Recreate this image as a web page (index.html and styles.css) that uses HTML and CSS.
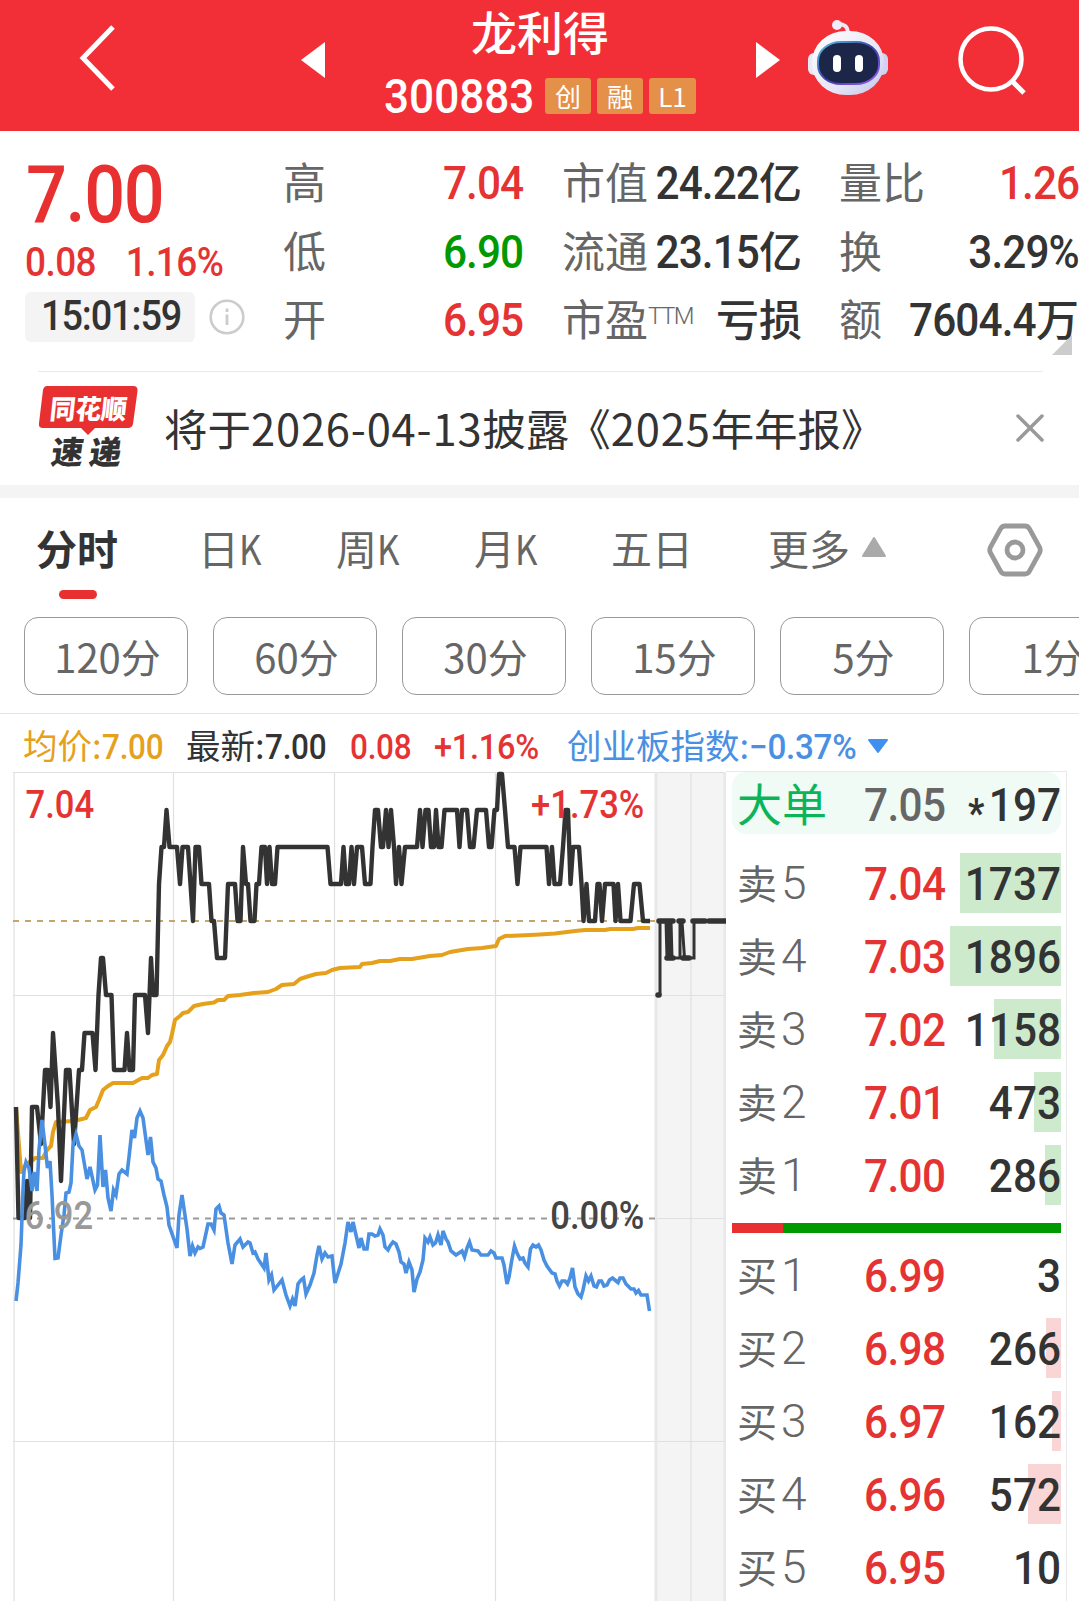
FILE: index.html
```html
<!DOCTYPE html>
<html lang="zh-CN">
<head>
    <meta charset="UTF-8">
    <meta name="viewport" content="width=device-width, initial-scale=1.0">
    <title>龙利得 300883</title>
    <link rel="stylesheet" href="styles.css">
</head>
<body>
    <header class="header">
        <svg class="back" width="40" height="70" viewBox="0 0 40 70"><path d="M36 4 L6 35 L36 66" fill="none" stroke="#fff" stroke-width="5"/></svg>
        <svg class="prev" width="24" height="36" viewBox="0 0 24 36"><path d="M24 0 V36 L0 18 Z" fill="#fff"/></svg>
        <div class="stock">
            <div class="stock-name">龙利得</div>
            <div class="stock-code">
                <span class="code num">300883</span>
                <span class="badge">创</span>
                <span class="badge">融</span>
                <span class="badge badge-l1">L1</span>
            </div>
        </div>
        <svg class="next" width="24" height="36" viewBox="0 0 24 36"><path d="M0 0 V36 L24 18 Z" fill="#fff"/></svg>
        <svg class="robot" width="82" height="80" viewBox="0 0 82 80">
            <defs>
                <linearGradient id="shell" x1="0" y1="0" x2="1" y2="1">
                    <stop offset="0" stop-color="#ffffff"/>
                    <stop offset="0.6" stop-color="#e6e6f6"/>
                    <stop offset="1" stop-color="#c3c5ea"/>
                </linearGradient>
                <linearGradient id="rim" x1="0" y1="0" x2="1" y2="1">
                    <stop offset="0" stop-color="#58c8e0"/>
                    <stop offset="0.5" stop-color="#3a3fa8"/>
                    <stop offset="1" stop-color="#9a5cf0"/>
                </linearGradient>
            </defs>
            <path d="M30 6 Q41 5 41 16" fill="none" stroke="#ece8f6" stroke-width="4"/>
            <circle cx="30" cy="7" r="5" fill="#f1edf9"/>
            <rect x="1" y="35" width="14" height="22" rx="6" fill="#e9eaf8"/>
            <rect x="67" y="35" width="14" height="22" rx="6" fill="#cfd2f2"/>
            <rect x="5" y="13" width="72" height="64" rx="34" ry="31" fill="url(#shell)"/>
            <rect x="11" y="24" width="61" height="42" rx="23" ry="19" fill="#1c2649" stroke="url(#rim)" stroke-width="2"/>
            <rect x="26" y="37" width="8" height="17" rx="4" fill="#fff"/>
            <rect x="48" y="37" width="8" height="17" rx="4" fill="#fff"/>
        </svg>
        <svg class="search" width="70" height="70" viewBox="0 0 70 70"><circle cx="34" cy="34" r="30.5" fill="none" stroke="#fff" stroke-width="4.5"/><path d="M54 55 L67 68" stroke="#fff" stroke-width="5"/></svg>
    </header>

    <section class="quote">
        <div class="price-box">
            <div class="price num">7.00</div>
            <div class="change num"><span>0.08</span><span>1.16%</span></div>
            <div class="time-row">
                <span class="time"><span class="num">15:01:59</span></span>
                <svg width="36" height="36" viewBox="0 0 36 36"><circle cx="18" cy="18" r="16.3" fill="none" stroke="#ccc" stroke-width="2.6"/><path d="M18 15.500 V26 M18 9.500 V13" stroke="#ccc" stroke-width="2.8"/></svg>
            </div>
        </div>
        <div class="col col-a">
            <div class="item"><label>高</label><span class="value"><span class="num red">7.04</span></span></div>
            <div class="item"><label>低</label><span class="value"><span class="num green">6.90</span></span></div>
            <div class="item"><label>开</label><span class="value"><span class="num red">6.95</span></span></div>
        </div>
        <div class="col col-b">
            <div class="item"><label>市值</label><span class="value"><span class="num">24.22</span>亿</span></div>
            <div class="item"><label>流通</label><span class="value"><span class="num">23.15</span>亿</span></div>
            <div class="item"><label>市盈<sup>TTM</sup></label><span class="value">亏损</span></div>
        </div>
        <div class="col col-c">
            <div class="item"><label>量比</label><span class="value"><span class="num red">1.26</span></span></div>
            <div class="item"><label>换</label><span class="value"><span class="num">3.29%</span></span></div>
            <div class="item"><label>额</label><span class="value"><span class="num">7604.4</span>万</span></div>
        </div>
        <div class="corner"></div>
    </section>

    <section class="news">
        <svg class="news-logo" width="102" height="88" viewBox="0 0 102 88">
            <path d="M9 1 H95 Q100 1 99.500 6 L95 39 Q94 43 90 43 H57 L50 50 L43 43 H5 Q0 43 1 38 L5 5 Q6 1 9 1 Z" fill="#e93030"/>
            <text class="logo-top" transform="translate(11 34) skewX(-6)" textLength="77" lengthAdjust="spacingAndGlyphs">同花顺</text>
            <text class="logo-bottom" transform="translate(12 79) skewX(-8)" textLength="70">速递</text>
        </svg>
        <div class="news-text">将于<b>2026-04-13</b>披露<em>《</em><b>2025</b>年年报》</div>
        <svg class="close" width="30" height="30" viewBox="0 0 30 30"><path d="M3 3 L27 27 M27 3 L3 27" stroke="#999" stroke-width="3.500" stroke-linecap="round"/></svg>
    </section>

    <nav class="tabs">
        <span class="tab active">分时</span>
        <span class="tab">日<b>K</b></span>
        <span class="tab">周<b>K</b></span>
        <span class="tab">月<b>K</b></span>
        <span class="tab">五日</span>
        <span class="tab more">更多<svg width="26" height="22" viewBox="0 0 26 22"><path d="M13 2 L24 20 H2 Z" fill="#aaa" stroke="#aaa" stroke-width="2" stroke-linejoin="round"/></svg></span>
        <svg class="setting" width="56" height="54" viewBox="0 0 56 54"><path d="M18 3 H38 Q41 3 42.500 6 L52.500 24 Q54 27 52.500 30 L42.500 48 Q41 51 38 51 H18 Q15 51 13.500 48 L3.500 30 Q2 27 3.500 24 L13.500 6 Q15 3 18 3 Z" fill="none" stroke="#999" stroke-width="4.800"/><circle cx="28" cy="27" r="8" fill="none" stroke="#999" stroke-width="4.800"/></svg>
    </nav>

    <div class="periods">
        <span class="period">120分</span>
        <span class="period">60分</span>
        <span class="period">30分</span>
        <span class="period">15分</span>
        <span class="period">5分</span>
        <span class="period">1分</span>
    </div>

    <div class="legend">
        <span class="avg">均价:<span class="num">7.00</span></span>
        <span class="latest">最新:<span class="num">7.00</span></span>
        <span class="diff red"><span class="num">0.08</span></span>
        <span class="rate red"><span class="num">+1.16%</span></span>
        <span class="index">创业板指数:<span class="num">−0.37%</span></span>
        <svg width="22" height="16" viewBox="0 0 22 16"><path d="M2 2 H20 L11 14 Z" fill="#4090ee" stroke="#4090ee" stroke-width="2" stroke-linejoin="round"/></svg>
    </div>

    <main class="market">
        <svg class="chart" width="726" height="830" viewBox="0 771 726 830">
            <!-- after-hours area -->
            <rect x="655" y="772" width="71" height="829" fill="#f4f4f4"/>
            <g class="grid">
                <path d="M13 772.500 H726 M13 995.500 H726 M657 1218.500 H726 M13 1441.500 H726"/>
                <path d="M14 772 V1601 M173.500 772 V1601 M334.500 772 V1601 M495.500 772 V1601 M691 772 V1601"/>
                <path class="grid-wide" d="M656 772 V1601 M725 772 V1601"/>
            </g>
            <path d="M13 921 H655" stroke="#c6a56c" stroke-width="2" stroke-dasharray="6 6"/>
            <path d="M13 1218.500 H655" stroke="#999" stroke-width="2" stroke-dasharray="6 6"/>

            <polyline class="line-avg" points="16,1107 21,1172 26,1164 33,1160 35,1158 43,1158 47,1150 51,1146 53,1132 56,1122 74,1121 86,1118 90,1110 96,1107 99,1100 103,1090 108,1086 113,1083 133,1083 142,1078 148,1078 152,1075 157,1074 159,1060 163,1055 167,1046 170,1042 172,1034 175,1020 180,1016 183,1013 188,1012 194,1006 203,1004 214,1002.5 218,1000 224,1000 228,996 240,995 254,993 268,992 276,989 282,985 294,984 300,979 306,977 316,974 326,973 332,970 340,968 360,967 362,964 372,963 380,961 390,961 400,959 412,959 430,956 442,955 450,952 468,949 482,948 496,946 499,939 505,936 530,935 540,934.5 555,933.5 575,931 585,930 605,930 610,929 633,929 638,928 650,928"/>
            <polyline class="line-price" points="16,1107 18.5,1218 25,1218 27,1181 30,1218 32,1107 37,1107 41,1144 45,1070 48,1070 50.5,1107 53,1033 58,1107 61,1181 66,1070 69.5,1070 74,1144 79,1070 82,1070 84.5,1033 92.5,1033 95.5,1070 98.5,995 101,958 103,958 106,995 111.5,995 114,1070 124.5,1070 127,1033 129.5,1070 133,1070 135,995 145,995 148,1033 151,958 153,995 156.5,995 159,884 161.5,847 164,847 166.5,810 169.5,847 177,847 180,884 182.5,847 188,847 190.5,884 193,921 195.5,847 199,847 201.5,884 209,884 211.5,921 214,921 217,958 225,958 228,884 235,884 237.5,921 240.5,921 243,847 246,884 248,884 250.5,921 254.5,921 256.5,884 259,884 261.5,847 265,847 267,884 269.5,847 272,884 275,884 277.5,847 327.5,847 330.5,884 341,884 343.5,847 346,884 349,884 351.5,847 354,884 357,847 362,847 365,884 370.5,884 372.5,847 375,810 378,810 381,847 383,847 386,810 388.5,847 391,810 394,847 396,884 399,847 401.5,884 405,847 417,847 420,810 422.5,847 425.5,810 428.5,810 431,847 434,847 436,810 438.5,847 441.5,847 444.5,810 457,810 459.5,847 462,810 467,810 470,847 473.5,847 477,810 486,810 489,847 491.5,847 494.5,810 497,810 499,774 502,774 505,810 508,847 514.5,847 517.5,884 520.5,847 546.5,847 549,884 552,847 554.5,884 560,884 563,847 565.5,810 568,810 570.5,884 573,847 579,847 581.5,884 583.5,921 586.5,884 589,921 595,921 597.5,884 599.5,884 602,921 605,884 613.5,884 615.5,921 618,884 620.5,921 630.5,921 634,884 639.5,884 643,921 650,921"/>
            <polyline class="line-index" points="16,1301 18,1283 21,1245 23,1190 24,1171 26,1162 29,1168 32,1191 34,1172 37,1191 39,1150 42,1120 45,1145 47.5,1168 50,1161 52,1195 55,1258.5 58,1258 61,1235 64,1215 66,1193 69,1192 71,1183 73,1145 76,1134 79,1146 82,1150 87,1179 90,1167 95,1190 97.5,1185 100,1135 103,1187 105.5,1170 108,1198 111,1211 113.5,1190 116,1195 119,1174 122,1170 127,1174 129,1157 132,1130 134.5,1138 137,1118 140,1111 143,1118 148,1155 150.5,1137 153,1162 156,1168 158,1179 161,1181 164,1195 167,1207 169,1225 177,1248 179,1215 182,1195 184.5,1212 187,1229 190,1256 192.5,1246 195,1253 198,1247 200,1248.5 203,1247 208,1224 211,1224 214,1230 216,1209 219,1206 221,1213 224,1215 228,1243 232,1264 235,1245 240,1239 243,1247 248,1242 250,1243 253,1253 255,1252 258,1259 264,1268 266,1253 269,1280 271.5,1275 274,1290 282,1280 286,1295 290,1306 292.5,1299 295,1306 298,1284 301,1280 303.5,1278 306,1294 310,1285 314,1273 317,1255 319,1246 322,1259 325,1253 328,1257 332,1256 335,1283 341,1264 345,1243 348,1222 351,1232 353,1222 359,1248 361,1238 364,1249 367,1249 369,1234 372,1234 375,1236 378,1235 380,1229 383,1235 385,1247 388,1250 390,1246 393,1242 396,1244 399,1252 401,1262 404,1264 406,1273 409,1262 412,1270 414,1292 417,1279 420,1272 423,1260 425,1238 428,1242 430,1237 433,1245 435.5,1243 438,1235 441,1245 443,1231 446,1239 448,1242 451,1251 456,1255 462,1251 464.5,1257 467,1248 469.5,1242 472,1250 478,1251 481,1255 488,1255 491,1251 494,1253 496,1258 502,1258 504,1265 507,1284 509,1277 512,1259 514.5,1246 517,1253 520,1259 523,1258 525,1263 528,1267 530.5,1249 533,1245 536,1247 538.5,1245 541,1250 544,1260 547,1266 552,1273 555,1274 557,1281 559.5,1286 562,1281 565,1281 567.5,1284 570,1278 572.5,1268 575,1287 578,1294 581,1297 583,1290 586,1276 588.5,1281 591,1276 594,1286 596.5,1287 599,1281 601.5,1281 604,1286 607,1285 609.5,1280 612.5,1278 618,1282.5 620,1278 623,1278 626,1284 631,1289 634,1289 636,1293 638.5,1290.5 641,1295 647,1295 649.5,1311"/>

            <!-- after-hours price -->
            <path class="line-after" d="M657.500 995 L660 994 V921 H666 L667 958 M669 921 V958 M671 921 L672 958 M667 958 H694 V921 H726 M680 921 V958 M682 921 L684.500 958"/>
            <path class="dots-after" d="M659 921 H673 M679 921 H683 M693 921 H705 M709 921 H726 M667 958 H673 M683 958 H689 M658 995 H659"/>

            <g transform="scale(0.91 1)">
                <text class="axis red-fill" x="28" y="818">7.04</text>
                <text class="axis red-fill" x="708" y="818" text-anchor="end">+1.73%</text>
                <text class="axis gray-fill" x="27" y="1229">6.92</text>
                <text class="axis dark-fill" x="708" y="1229" text-anchor="end">0.00%</text>
            </g>
        </svg>

        <div class="book">
            <div class="big-order">
                <span class="big-label">大单</span>
                <span class="book-price num">7.05</span>
                <span class="book-qty num"><em>*</em>197</span>
            </div>
            <div class="asks">
                <div class="row"><label>卖<b>5</b></label><span class="book-price num">7.04</span><span class="bar" style="width:101px"></span><span class="book-qty num">1737</span></div>
                <div class="row"><label>卖<b>4</b></label><span class="book-price num">7.03</span><span class="bar" style="width:111px"></span><span class="book-qty num">1896</span></div>
                <div class="row"><label>卖<b>3</b></label><span class="book-price num">7.02</span><span class="bar" style="width:67px"></span><span class="book-qty num">1158</span></div>
                <div class="row"><label>卖<b>2</b></label><span class="book-price num">7.01</span><span class="bar" style="width:27px"></span><span class="book-qty num">473</span></div>
                <div class="row"><label>卖<b>1</b></label><span class="book-price num">7.00</span><span class="bar" style="width:16px"></span><span class="book-qty num">286</span></div>
            </div>
            <div class="ratio"><div class="ratio-buy" style="width:50.5px"></div></div>
            <div class="bids">
                <div class="row"><label>买<b>1</b></label><span class="book-price num">6.99</span><span class="book-qty num">3</span></div>
                <div class="row"><label>买<b>2</b></label><span class="book-price num">6.98</span><span class="bar" style="width:15px"></span><span class="book-qty num">266</span></div>
                <div class="row"><label>买<b>3</b></label><span class="book-price num">6.97</span><span class="bar" style="width:9px"></span><span class="book-qty num">162</span></div>
                <div class="row"><label>买<b>4</b></label><span class="book-price num">6.96</span><span class="bar" style="width:33px"></span><span class="book-qty num">572</span></div>
                <div class="row"><label>买<b>5</b></label><span class="book-price num">6.95</span><span class="book-qty num">10</span></div>
            </div>
        </div>
    </main>
</body>
</html>
```

FILE: styles.css
```css
* {
    box-sizing: border-box;
}

body {
    margin: 0;
    width: 1079px;
    height: 1601px;
    overflow: hidden;
    background: #fff;
    color: #333;
    font-family: "Noto Sans CJK SC", sans-serif;
}

em, b {
    font-style: normal;
    font-weight: inherit;
}

svg {
    display: block;
    flex: none;
}

/* condensed digits */
.num {
    display: inline-block;
    font-family: Roboto, "Noto Sans CJK SC", sans-serif;
    font-weight: 500;
    white-space: nowrap;
    transform: scaleX(0.9);
    transform-origin: left center;
}

.red {
    color: #e53333;
}

.green {
    color: #090;
}

/* header */
.header {
    display: flex;
    align-items: flex-start;
    height: 131px;
    background: #f22f37;
    color: #fff;
}

.back {
    margin: 23px 0 0 77px;
}

.prev {
    margin: 42px 0 0 184px;
}

.stock {
    width: 430px;
    text-align: center;
}

.stock-name {
    height: 70px;
    line-height: 60px;
    font-size: 46px;
    font-weight: 500;
}

.stock-code {
    display: flex;
    align-items: center;
    height: 52px;
    padding-left: 59px;
}

.code {
    width: 155px;
    margin-right: 6px;
    padding-top: 2px;
    text-align: left;
    font-size: 49px;
    line-height: 52px;
}

.badge {
    width: 46px;
    height: 36px;
    margin-right: 6px;
    border-radius: 3px;
    background: #e59049;
    font-size: 26px;
    line-height: 35px;
}

.badge-l1 {
    width: 47px;
}

.next {
    margin: 42px 0 0 1px;
}

.robot {
    margin: 18px 0 0 27px;
}

.search {
    margin: 25px 0 0 68px;
}

/* quote */
.quote {
    position: relative;
    display: flex;
    height: 240px;
    padding: 17px 0 0 25px;
}

.price-box {
    width: 258px;
}

.price {
    height: 86px;
    padding-left: 1px;
    font-size: 80px;
    line-height: 95px;
    letter-spacing: -1.5px;
    color: #e93030;
}

.change {
    display: flex;
    gap: 33px;
    height: 58px;
    font-size: 41px;
    line-height: 56px;
    letter-spacing: -0.6px;
    color: #e53333;
}

.time-row {
    display: flex;
    align-items: center;
    gap: 14px;
    height: 50px;
}

.time {
    width: 170px;
    height: 50px;
    padding-left: 16px;
    border-radius: 6px;
    background: #f4f4f4;
    font-size: 42px;
    letter-spacing: -1.2px;
}

.time .num {
    display: block;
    line-height: 48px;
}

.col-a {
    width: 240px;
}

.col-b {
    width: 240px;
    margin-left: 39px;
}

.col-c {
    width: 240px;
    margin-left: 37px;
}

.item {
    display: flex;
    justify-content: space-between;
    height: 68.5px;
    line-height: 66px;
    white-space: nowrap;
}

.item label {
    font-size: 43px;
    line-height: 64px;
    color: #666;
}

.item sup {
    position: relative;
    top: -12px;
    vertical-align: baseline;
    font-family: Roboto, sans-serif;
    font-weight: 300;
    font-size: 24px;
    line-height: 0;
    letter-spacing: -1.5px;
}

.value {
    font-size: 43px;
    font-weight: 500;
    line-height: 64px;
}

.value .num {
    font-size: 47px;
    letter-spacing: -1px;
    transform-origin: right center;
}

.col-b .value, .col-c .value {
    margin-left: -30px;
}

.corner {
    position: absolute;
    right: 7px;
    bottom: 16px;
    border-bottom: 20px solid #ccc;
    border-left: 20px solid transparent;
}

/* news */
.news {
    display: flex;
    align-items: center;
    height: 127px;
    padding: 0 34px 0 38px;
    border-bottom: 13px solid #f4f4f4;
    background: linear-gradient(#e9e9e9, #e9e9e9) 38px 0 / 1005px 1px no-repeat;
}

.news-logo {
    margin-top: 2px;
}

.logo-top {
    font-size: 27px;
    font-weight: 900;
    fill: #fff;
}

.logo-bottom {
    font-size: 32px;
    font-weight: 900;
    fill: #333;
}

.news-text {
    flex: 1;
    padding-left: 24px;
    font-size: 43.5px;
    line-height: 60px;
    white-space: nowrap;
}

.news-text b {
    letter-spacing: 0.8px;
}

.news-text em {
    margin-left: -2px;
}

/* tabs */
.tabs {
    display: flex;
    align-items: flex-start;
    height: 119px;
    padding: 25px 36px 0 36px;
    color: #666;
    font-size: 41px;
    line-height: 48px;
}

.tab {
    width: 138px;
}

.tab b {
    display: inline-block;
    transform: scaleX(0.85);
    transform-origin: left center;
}

.tab:nth-child(1) {
    width: 162px;
}

.tab:nth-child(4) {
    width: 137px;
}

.tab:nth-child(5) {
    width: 157px;
}

.active {
    color: #333;
    font-weight: 700;
}

.active::after {
    content: "";
    display: block;
    width: 38px;
    height: 9px;
    margin: 19px 0 0 23px;
    border-radius: 5px;
    background: #e93030;
}

.more {
    display: flex;
    align-items: center;
    gap: 11px;
}

.setting {
    margin-left: auto;
}

.periods {
    display: flex;
    gap: 25px;
    height: 97px;
    padding-left: 24px;
    border-bottom: 1px solid #e5e5e5;
    overflow: hidden;
}

.period {
    flex: none;
    width: 164px;
    height: 78px;
    padding-left: 3px;
    border: 1px solid #999;
    border-radius: 14px;
    color: #666;
    font-size: 40px;
    line-height: 76px;
    text-align: center;
}

/* chart legend */
.legend {
    display: flex;
    align-items: center;
    height: 57px;
    padding: 6px 0 0 23px;
    font-size: 34.5px;
    line-height: 50px;
    white-space: nowrap;
}

.legend .num {
    font-size: 35px;
    letter-spacing: -0.3px;
}

.avg {
    width: 163px;
    color: #e5a01c;
}

.latest {
    width: 164px;
}

.diff {
    width: 84px;
}

.rate {
    width: 133px;
}

.rate .num {
    transform: scaleX(0.93);
}

.index {
    width: 300px;
    color: #4a90e2;
}

.index .num {
    transform: scaleX(0.95);
}

/* chart */
.market {
    display: flex;
    height: 830px;
}

.grid {
    fill: none;
    stroke: #e0e0e0;
    stroke-width: 1.2;
}

.grid-wide {
    stroke: #e8e8e8;
    stroke-width: 3;
}

.line-avg, .line-price, .line-index {
    fill: none;
    stroke-linejoin: round;
}

.line-avg {
    stroke: #e5a01c;
    stroke-width: 4;
}

.line-price {
    stroke: #333;
    stroke-width: 4.4;
}

.line-index {
    stroke: #4a90e2;
    stroke-width: 3.6;
    stroke-linejoin: miter;
}

.line-after {
    fill: none;
    stroke: #333;
    stroke-width: 3;
}

.dots-after {
    fill: none;
    stroke: #333;
    stroke-width: 5.5;
    stroke-linecap: round;
}

.axis {
    font-family: Roboto, sans-serif;
    font-size: 38px;
    font-weight: 500;
}

.red-fill {
    fill: #e53333;
}

.gray-fill {
    fill: #999;
}

.dark-fill {
    fill: #444;
}

/* order book */
.book {
    width: 341px;
    padding: 0 5px 0 6px;
    border-top: 1px solid #e9e9e9;
    border-right: 1px solid #e9e9e9;
}

.big-order, .row {
    position: relative;
    display: flex;
    align-items: center;
    width: 329px;
}

.big-order {
    height: 62px;
    margin-bottom: 12px;
    border-radius: 14px;
    background: #f1fbf6;
}

.big-label {
    width: 131px;
    padding-left: 5px;
    font-size: 45px;
    line-height: 60px;
    color: #0ab55a;
}

.big-order .book-price {
    color: #666;
}

.row {
    height: 73px;
}

.row label {
    width: 131px;
    padding-left: 5px;
    font-size: 40px;
    line-height: 73px;
    color: #666;
}

.row label b {
    margin-left: 4px;
    font-family: Roboto, sans-serif;
    font-weight: 300;
    font-size: 46px;
}

.book-price {
    width: 90px;
    padding: 2px 0 0 1px;
    font-size: 47px;
    letter-spacing: -0.6px;
    color: #e53333;
}

.book-qty {
    position: relative;
    flex: 1;
    padding-top: 2px;
    text-align: right;
    font-size: 47px;
    transform-origin: right center;
}

.book-qty em {
    position: relative;
    top: 6px;
    margin-right: 5px;
    font-size: 40px;
    font-weight: 700;
}

/* volume bar lies under the quantity */
.bar {
    position: absolute;
    top: 7px;
    right: 0;
    height: 60px;
    background: #cdeacd;
}

.bids .bar {
    background: #fad5d5;
}

.ratio {
    height: 10px;
    margin: 12px 0 5px;
    background: #090;
}

.ratio-buy {
    height: 10px;
    background: #e93030;
}
```
